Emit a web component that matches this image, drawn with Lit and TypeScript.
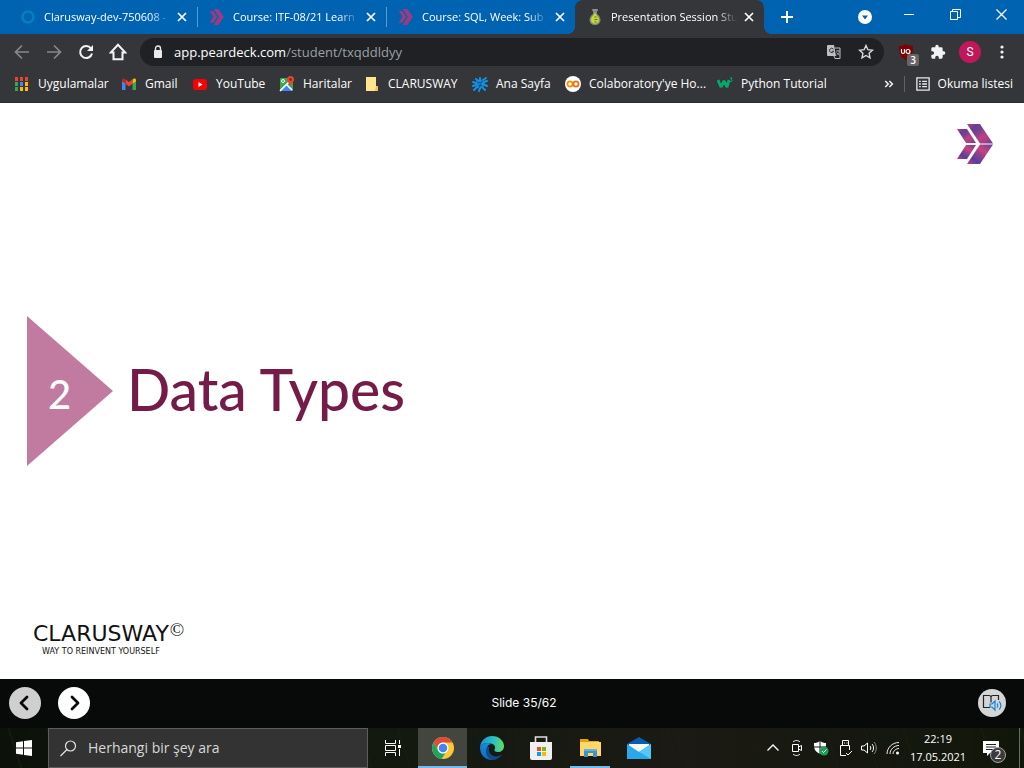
import { LitElement, html, css, svg } from "lit";
import { customElement } from "lit/decorators.js";
import { classMap } from "lit/directives/class-map.js";

const chevrons = html`<svg width="16" height="16" viewBox="0 0 37 41">
  <path d="M0 5h9l10 15-10 15H0l9-15z" fill="#9b3b83"/>
  <path d="M10 0h12l14 20-14 21H10l13-21z" fill="#9b3b83"/>
</svg>`;

const pear = html`<svg width="16" height="16" viewBox="0 0 16 16">
  <rect x="5" y="0" width="6" height="2" rx="1" fill="#8d9296"/>
  <path d="M6 2h4v3c2.500 1.500 3.500 4 3.500 6 0 3-2.500 5-5.500 5s-5.500-2-5.500-5c0-2 1-4.500 3.500-6z" fill="#808a86"/>
  <path d="M8 3c.5 3 4 4.500 4 8 0 2.500-1.800 3.800-4 3.800S4 13.500 4 11c0-3.500 3.500-5 4-8z" fill="#c5d92e"/>
  <path d="M7.500 8h2M7.500 10.500h3M7.500 13h2" stroke="#59701d" stroke-width="1"/>
</svg>`;

const ring = html`<svg width="16" height="16" viewBox="0 0 16 16">
  <circle cx="8" cy="8" r="5.500" fill="none" stroke="#0580bd" stroke-width="2.600"/>
</svg>`;

const cross = html`<svg width="10" height="10" viewBox="0 0 10 10"><path d="M1 1l8 8M9 1L1 9" stroke="#fff" stroke-width="1.700"/></svg>`;

const tabs = [
  { title: "Clarusway-dev-750608 -", icon: ring, active: false, line: true },
  { title: "Course: ITF-08/21 Learn", icon: chevrons, active: false, line: true },
  { title: "Course: SQL, Week: Sub", icon: chevrons, active: false, line: false },
  { title: "Presentation Session Stu", icon: pear, active: true, line: false },
];

const colors = ["#ea4335", "#ea4335", "#ea4335", "#34a853", "#4285f4", "#fbbc04", "#34a853", "#fbbc04", "#fbbc04"];

const bookmarks = [
  { label: "Uygulamalar", icon: html`<svg width="16" height="16" viewBox="0 0 16 16">${colors.map((c, i) => svg`<rect x=${1 + (i % 3) * 5} y=${1 + Math.floor(i / 3) * 5} width="3" height="4" fill=${c}/>`)}</svg>` },
  { label: "Gmail", icon: html`<svg width="16" height="16" viewBox="0 0 16 16">
    <path d="M1 14V4l3.500 2.600V14z" fill="#4285f4"/><path d="M11.500 14V6.600L15 4v10z" fill="#34a853"/>
    <path d="M11.500 3.500l1-.8c1.200-.8 2.500 0 2.500 1.200v1.300l-3.500 2.600z" fill="#fbbc04"/>
    <path d="M4.500 3.500L8 6.100l3.500-2.600v4.300L8 10.400 4.500 7.800z" fill="#ea4335"/>
    <path d="M1 3.900c0-1.200 1.300-2 2.500-1.200l1 .8v4.300L1 5.200z" fill="#c5221f"/></svg>` },
  { label: "YouTube", icon: html`<svg width="16" height="16" viewBox="0 0 16 16"><rect x="1" y="3" width="14" height="11" rx="3" fill="#f00"/><path d="M6.500 6l4 2.500-4 2.500z" fill="#fff"/></svg>` },
  { label: "Haritalar", icon: html`<svg width="16" height="16" viewBox="0 0 16 16">
    <rect x="1" y="2" width="13" height="13" rx="1" fill="#34a853"/><path d="M1 14l6-6 2 2-5 5H1z" fill="#fbd75b"/><path d="M14 14L8 8l-7 7h13z" fill="#4285f4"/>
    <path d="M8 9l5 5M1 15L10 6" stroke="#fff" stroke-width="1.600"/><circle cx="4" cy="5" r="1.500" fill="none" stroke="#fff"/>
    <path d="M11.500 0a3.500 3.500 0 0 1 3.500 3.500c0 2.500-2.500 3.500-3.500 7-1-3.500-3.500-4.500-3.500-7A3.500 3.500 0 0 1 11.500 0z" fill="#ea4335"/><circle cx="11.500" cy="3.500" r="1.300" fill="#8c1a12"/></svg>` },
  { label: "CLARUSWAY", icon: html`<svg width="16" height="16" viewBox="0 0 16 16"><path d="M2 1h10v9h2v5H2z" fill="#ffe58f"/><path d="M12 10h2v5h-3z" fill="#efc44e"/></svg>` },
  { label: "Ana Sayfa", icon: html`<svg width="16" height="16" viewBox="0 0 16 16"><circle cx="8" cy="8" r="4.500" fill="#138ad5"/>
    <path d="M1 6l3 1M4 3l2 2M8 2v2M11 4l3-2M11 8l4 2M1 10l3-1M2 14l4-4M7 15l1-3M11 12l2 2M12 6l3-1" stroke="#1592e2" stroke-width="2" stroke-linecap="round"/><path d="M5 6l3 1 3-2M6 9l4 1M9 8l-2 4" fill="none" stroke="#0b4b8c"/></svg>` },
  { label: "Colaboratory'ye Ho...", icon: html`<svg width="16" height="16" viewBox="0 0 16 16"><circle cx="8" cy="8" r="8" fill="#fff"/><circle cx="5" cy="8" r="2.600" fill="none" stroke="#f29100" stroke-width="1.800"/><circle cx="11" cy="8" r="2.600" fill="none" stroke="#e8710a" stroke-width="1.800"/></svg>` },
  { label: "Python Tutorial", icon: html`<svg width="16" height="16" viewBox="0 0 16 16"><path d="M1 4l3 7 3-6 3 6 2-7" fill="none" stroke="#04aa6d" stroke-width="2.800" stroke-linejoin="bevel"/><path d="M13 2h2l-1 1.500c1.500 0 1.500 2.500-1 2" fill="none" stroke="#04aa6d"/></svg>` },
];

const line = (d: string, w = 1.6, color = "#f1f3f4", size = 16) =>
  html`<svg width=${size} height=${size} viewBox="0 0 16 16" fill="none" stroke=${color} stroke-width=${w}><path d=${d} /></svg>`;

@customElement("browser-tabs")
class BrowserTabs extends LitElement {
  static styles = css`
    :host { display: block; background: #0063b1; color: #fff; font: 11px/16px "Open Sans", sans-serif; }
    .strip { display: flex; height: 34px; padding-left: 8px; }
    .tab { flex: 0 1 189px; min-width: 0; display: flex; align-items: center; gap: 8px; padding: 0 7px 0 12px; box-sizing: border-box; position: relative; }
    .tab svg { flex: none; }
    .title { flex: 1; min-width: 0; margin-right: -4px; white-space: nowrap; color: inherit; text-decoration: none; -webkit-mask-image: linear-gradient(90deg, #000 84%, transparent); mask-image: linear-gradient(90deg, #000 84%, transparent); }
    .line::after { content: ""; position: absolute; right: -1px; top: 7px; width: 1px; height: 20px; background: #5f9ccd; }
    .active { background: #35363a; border-radius: 8px 8px 0 0; }
    .active::before, .active::after { content: ""; position: absolute; bottom: 0; width: 8px; height: 8px; }
    .active::before { left: -8px; background: radial-gradient(circle at 0 0, transparent 8px, #35363a 8px); }
    .active::after { right: -8px; background: radial-gradient(circle at 100% 0, transparent 8px, #35363a 8px); }
    button { border: 0; padding: 0; background: none; display: grid; place-items: center; }
    .close { width: 16px; height: 16px; flex: none; }
    .add { width: 28px; margin-left: 9px; }
    .window { display: flex; margin-left: auto; }
    .window button { width: 46px; height: 28px; }
    .window .search { width: 42px; height: 34px; }
  `;
  render() {
    return html`<nav class="strip" aria-label="Tabs">
      ${tabs.map((t) => html`<div class=${classMap({ tab: true, active: t.active, line: t.line })}>
        ${t.icon}<a class="title" href="#">${t.title}</a><button class="close" aria-label="Close tab">${cross}</button>
      </div>`)}
      <button class="add" aria-label="New tab">${line("M8 2v12M2 8h12", 2, "#fff")}</button>
      <div class="window">
        <button class="search" aria-label="Search tabs"><svg width="14" height="14" viewBox="0 0 14 14"><circle cx="7" cy="7" r="7" fill="#fff"/><path d="M4 5.500h6L7 9.500z" fill="#0063b1"/></svg></button>
        <button aria-label="Minimize"><svg width="10" height="10"><path d="M0 5.500h10" stroke="#fff"/></svg></button>
        <button aria-label="Restore"><svg width="11" height="11" fill="none" stroke="#fff"><path d="M.5 2.500h7v8h-7zM2.500 2.500v-2h8v8h-3"/></svg></button>
        <button aria-label="Close"><svg width="11" height="11"><path d="M.5.500l10 10M10.500.500l-10 10" stroke="#fff" stroke-width="1.200"/></svg></button>
      </div>
    </nav>`;
  }
}

@customElement("browser-toolbar")
class BrowserToolbar extends LitElement {
  static styles = css`
    :host { display: block; background: #35363a; color: #fff; font: 12px/16px "Open Sans", sans-serif; border-bottom: 1px solid #28292c; }
    button { border: 0; padding: 0; background: none; display: grid; place-items: center; width: 32px; height: 28px; flex: none; position: relative; }
    .row { display: flex; align-items: center; height: 36px; padding: 0 6px; }
    .address { flex: 1; min-width: 0; display: flex; align-items: center; height: 28px; margin: 0 6px; padding-left: 12px; padding-right: 2px; box-sizing: border-box; border-radius: 14px; background: #202124; }
    .url { flex: 1; margin-left: 10px; font-size: 13px; line-height: 20px; color: #9aa0a6; text-decoration: none; white-space: nowrap; overflow: hidden; }
    .url b { font-weight: 400; color: #fff; }
    .count { position: absolute; right: 3px; bottom: 0; width: 12px; height: 12px; border-radius: 2px; background: #666; color: #fff; font: 600 10px/12px "Open Sans", sans-serif; }
    .avatar { width: 22px; height: 22px; border-radius: 50%; background: #c2185b; color: #fff; font: 12px/22px Roboto, sans-serif; }
    .bookmarks { display: flex; align-items: center; height: 28px; padding: 0 14px 4px; }
    .list { display: grid; grid-template-columns: 107px 71px 87px 85px 108px 93px 152px auto; }
    .mark { display: flex; align-items: center; gap: 8px; color: #fff; text-decoration: none; white-space: nowrap; }
    .end { display: flex; align-items: center; margin-left: auto; }
    .reading { border-left: 1px solid #5f6368; padding-left: 11px; margin-right: -3px; }
    .end button { width: 29px; height: 16px; }
  `;
  render() {
    return html`<div class="row">
        <button aria-label="Back">${line("M15 8H2M8 1.500L1.500 8 8 14.500", 1.7, "#86888a")}</button>
        <button aria-label="Forward">${line("M1 8h13M8 1.500L14.500 8 8 14.500", 1.7, "#86888a")}</button>
        <button aria-label="Reload"><svg width="16" height="16" viewBox="0 0 16 16"><path d="M13 4.500A6 6 0 1 0 14 9.500" fill="none" stroke="#f1f3f4" stroke-width="2"/><path d="M15 1v6H9z" fill="#f1f3f4"/></svg></button>
        <button aria-label="Home">${line("M8 1.500L1.500 8.500H4v6h8v-6h2.500z", 1.8, "#f1f3f4", 18)}</button>
        <div class="address">
          <svg width="12" height="14" viewBox="0 0 12 14"><rect x="2" y="5" width="8" height="8" rx="1" fill="#e8eaed"/><path d="M3.500 6V3.500a2.500 2.500 0 0 1 5 0V6" fill="none" stroke="#e8eaed" stroke-width="1.400"/></svg>
          <a class="url" href="#"><b>app.peardeck.com</b>/student/txqddldyy</a>
          <button aria-label="Translate"><svg width="16" height="16" viewBox="0 0 16 16"><path d="M2 1h6l2 11H2a1 1 0 0 1-1-1V2a1 1 0 0 1 1-1z" fill="#bdc1c6"/><path d="M8.500 4H14v10.500H9L8 12" fill="none" stroke="#bdc1c6"/><path d="M7.500 5.200a2.200 2.200 0 1 0 .3 2H5.700" fill="none" stroke="#35363a"/><path d="M10 7h4M12 6v1M13.500 7c-.5 2-1.500 3-3 4M10.500 8.500l3 3" fill="none" stroke="#9da1a6"/></svg></button>
          <button aria-label="Bookmark">${line("M8 1.500l1.900 4.200 4.600.5-3.400 3.100.9 4.500-4-2.300-4 2.300.9-4.500-3.400-3.100 4.600-.5z", 1.4, "#dadce0")}</button>
        </div>
        <button aria-label="uBlock Origin"><svg width="16" height="16" viewBox="0 0 16 16"><path d="M8 0c2 1.500 4 2 7 2 0 6 0 11-7 14C1 13 1 8 1 2c3 0 5-.5 7-2z" fill="#800000"/><path d="M3.500 5v3c0 2 3 2 3 0V5" fill="none" stroke="#fff" stroke-width="1.200"/><circle cx="10" cy="7.500" r="2" fill="none" stroke="#fff" stroke-width="1.200"/></svg><span class="count">3</span></button>
        <button aria-label="Extensions"><svg width="16" height="16" viewBox="0 0 24 24"><path fill="#f1f3f4" d="M20.500 11H19V7a2 2 0 0 0-2-2h-4V3.500a2.500 2.500 0 0 0-5 0V5H4a2 2 0 0 0-2 2v3.800h1.500a2.700 2.700 0 0 1 0 5.400H2V20a2 2 0 0 0 2 2h3.800v-1.500a2.700 2.700 0 0 1 5.400 0V22H17a2 2 0 0 0 2-2v-4h1.500a2.500 2.500 0 0 0 0-5z"/></svg></button>
        <button aria-label="Profile"><span class="avatar">S</span></button>
        <button aria-label="Menu"><svg width="4" height="16" fill="#f1f3f4"><circle cx="2" cy="3" r="1.600"/><circle cx="2" cy="8" r="1.600"/><circle cx="2" cy="13" r="1.600"/></svg></button>
      </div>
      <nav class="bookmarks" aria-label="Bookmarks">
        <div class="list">${bookmarks.map((b) => html`<a class="mark" href="#">${b.icon}<span>${b.label}</span></a>`)}</div>
        <div class="end">
          <button aria-label="More bookmarks">${line("M3 4l4 4-4 4M8.500 4l4 4-4 4", 2, "#f1f3f4", 12)}</button>
          <a class="mark reading" href="#">${line("M1 1h14v14H1zM3.500 5h2M7 5h5.500M3.500 8h2M7 8h5.500M3.500 11h2M7 11h5.500", 1.5, "#e8eaed", 14)}<span>Okuma listesi</span></a>
        </div>
      </nav>`;
  }
}

@customElement("deck-slide")
class DeckSlide extends LitElement {
  static styles = css`
    :host { display: flex; flex-direction: column; min-height: 0; }
    .slide { flex: 1; display: grid; grid-template-rows: 1fr auto 1fr; background: #fff; }
    .logo { justify-self: end; margin: 20px 30px 0 0; }
    .topic { display: flex; align-items: center; gap: 14px; margin-left: 27px; }
    .number { width: 86px; height: 150px; box-sizing: border-box; padding: 6px 0 0 21px; display: flex; align-items: center; background: #c27ba0; clip-path: polygon(0 0, 100% 50%, 0 100%); color: #fff; font: 500 40px/48px Lato, sans-serif; }
    h1 { margin: 0; padding-bottom: 4px; color: #741b47; font: 500 57px/64px Lato, sans-serif; white-space: nowrap; }
    .brand { align-self: end; justify-self: start; margin: 0 0 22px 33px; color: #111; font-family: "DejaVu Sans", sans-serif; }
    .name { font-size: 22px; line-height: 26px; display: flex; align-items: flex-start; gap: 1px; }
    .name sup { font: 19px/18px "Liberation Serif", serif; }
    .motto { font-size: 8px; line-height: 10px; margin-left: 9px; }
    .controls { display: flex; align-items: center; gap: 17px; height: 49px; box-sizing: border-box; padding: 0 18px 1px 9px; background: #080a09; color: #fff; }
    button { width: 32px; height: 32px; flex: none; border: 0; padding: 0; border-radius: 50%; background: #fff; display: grid; place-items: center; }
    .off { background: #cfcfcf; }
    .page { flex: 1; text-align: center; padding-right: 20px; font: 12px/16px Inter, sans-serif; }
    .reader { width: 28px; height: 28px; background: #d4d6d5; }
  `;
  render() {
    return html`<main class="slide">
        <svg class="logo" width="37" height="42" viewBox="0 0 37 42">
          <defs>
            <linearGradient id="a" x1="0" y1="0" x2="1" y2="1"><stop offset="0" stop-color="#c8437f"/><stop offset=".2" stop-color="#6b3c92"/><stop offset=".4" stop-color="#7a3f90"/><stop offset=".62" stop-color="#b84284"/><stop offset=".8" stop-color="#a83e86"/><stop offset="1" stop-color="#573d94"/></linearGradient>
            <linearGradient id="b" x1="0" y1="1" x2="1" y2="0"><stop offset="0" stop-color="#c53878"/><stop offset=".25" stop-color="#58409a"/><stop offset=".45" stop-color="#8c3f8c"/><stop offset=".65" stop-color="#c8437f"/><stop offset="1" stop-color="#674096"/></linearGradient>
          </defs>
          <path d="M0 6h10l9 14H9z" fill="url(#a)"/><path d="M9 22h10l-9 14H0z" fill="url(#b)"/>
          <path d="M10 1h13l13 19.500H23z" fill="url(#a)"/><path d="M23 21.500h13L23 41H10z" fill="url(#b)"/>
        </svg>
        <div class="topic"><div class="number">2</div><h1>Data Types</h1></div>
        <div class="brand"><div class="name">CLARUSWAY<sup>©</sup></div><div class="motto">WAY TO REINVENT YOURSELF</div></div>
      </main>
      <footer class="controls">
        <button class="off" aria-label="Previous slide"><svg width="16" height="16" viewBox="0 0 16 16"><path d="M10 2L4 8l6 6" fill="none" stroke="#080a09" stroke-width="2.800" stroke-linecap="round" stroke-linejoin="round"/></svg></button>
        <button aria-label="Next slide"><svg width="16" height="16" viewBox="0 0 16 16"><path d="M6 2l6 6-6 6" fill="none" stroke="#080a09" stroke-width="2.800" stroke-linecap="round" stroke-linejoin="round"/></svg></button>
        <span class="page">Slide 35/62</span>
        <button class="reader" aria-label="Immersive reader"><svg width="20" height="18" viewBox="0 0 20 18" fill="none"><path d="M8 13.500H1.500v-12H7c1.500 0 2 .5 2 2v5M9 3.500c0-1.500.500-2 2-2h5.500V6" stroke="#222" stroke-width="1.200"/><path d="M8 10v3h2l3 3V7l-3 3zM15 9.500c1 1 1 3 0 4M17 7.500c2.500 2 2.500 6 0 8" stroke="#1683d8" stroke-width="1.200"/></svg></button>
      </footer>`;
  }
}

const apps = [
  { name: "Google Chrome", cls: "current", icon: html`<svg width="24" height="24" viewBox="0 0 24 24"><circle cx="12" cy="12" r="11" fill="#fcc934"/><path d="M2.500 6.500A11 11 0 0 1 21.500 6.500H12a5.500 5.500 0 0 0-4.800 8.200z" fill="#dd4b3e"/><path d="M2.500 6.500l4.700 8.200c1 1.800 2.900 2.800 4.800 2.800l2.500-.6L10.500 22.900A11 11 0 0 1 2.500 6.500z" fill="#1da462"/><circle cx="12" cy="12" r="5.500" fill="#fff"/><circle cx="12" cy="12" r="4.300" fill="#4285f4"/></svg>` },
  { name: "Microsoft Edge", cls: "", icon: html`<svg width="24" height="24" viewBox="0 0 24 24"><defs><linearGradient id="e1" x1="0" y1="0" x2="1" y2="0"><stop offset="0" stop-color="#1893d7"/><stop offset=".55" stop-color="#28bfc9"/><stop offset="1" stop-color="#65dd58"/></linearGradient><linearGradient id="e2" x1="0" y1="0" x2="0" y2="1"><stop offset="0" stop-color="#168cd9"/><stop offset="1" stop-color="#1268bd"/></linearGradient></defs>
    <path d="M0 11C1 4 6 0 12 0c7 0 12 5 12 10 0 4-3 6-6 6s-4-1.500-3.500-2.500c1-1.500 1-4-2-5.500C8 6 2 7 0 11z" fill="url(#e1)"/><path d="M0 11c2-4 8-5 12-3-4 0-5 3-5 5.500C7 19 12 24 12 24 5 24 0 19 0 11z" fill="url(#e2)"/><path d="M9.500 10.500C8 13 9 20 15.500 20.500c3 .2 5-1 6.500-2.500-2 4-6 6-10 6-4-1-6.500-6-6-10 .2-2 1.500-3.500 3.500-3.500z" fill="#114a8b"/></svg>` },
  { name: "Microsoft Store", cls: "", icon: html`<svg width="24" height="24" viewBox="0 0 24 24"><path d="M6.500 7V1h11v6" fill="none" stroke="#dedede" stroke-width="1.600"/><path d="M1 6h22v16a2 2 0 0 1-2 2H3a2 2 0 0 1-2-2z" fill="#f0f0f0"/><path d="M8 11h4v4H8z" fill="#f25022"/><path d="M13 11h4v4h-4z" fill="#7fba00"/><path d="M8 16h4v4H8z" fill="#00a4ef"/><path d="M13 16h4v4h-4z" fill="#ffb900"/></svg>` },
  { name: "File Explorer", cls: "open", icon: html`<svg width="24" height="24" viewBox="0 0 24 24"><path d="M2 3h8l1 2h10v14H2z" fill="#e5a00d"/><path d="M2 6h21v14H2z" fill="#ffd867"/><path d="M6 21v-8h13v8h-4v-4h-5v4z" fill="#3f92d2"/><path d="M6 13h13v2H6z" fill="#62b0e8"/></svg>` },
  { name: "Mail", cls: "", icon: html`<svg width="26" height="24" viewBox="0 0 26 24"><path d="M1 8l12-7 12 7v3H1z" fill="#0b5cad"/><path d="M3 8h20v8H3z" fill="#f4f7f9"/><path d="M1 8l12 8 12-8v15H1z" fill="#2aa8ea"/><path d="M25 8v15L10 14l3 2z" fill="#55c7f6"/></svg>` },
];

@customElement("task-bar")
class TaskBar extends LitElement {
  static styles = css`
    :host { display: block; color: #fff; font: 11px/18px "Open Sans", sans-serif; }
    .bar { display: flex; height: 40px; background: #12150d; background-image: repeating-linear-gradient(72deg, transparent 0 19px, #161c10 20px, transparent 22px 37px), linear-gradient(90deg, #0c120a, #141910 40%, #1b1a14 66%, #11160a); }
    button { border: 0; padding: 0; background: none; color: inherit; font: inherit; display: grid; place-items: center; height: 40px; flex: none; position: relative; }
    .start { width: 48px; }
    .search { display: flex; flex: 0 1 320px; align-items: center; gap: 11px; box-sizing: border-box; padding: 0 11px; background: #333; border: 1px solid #5d5d5d; }
    .search input { flex: 1; min-width: 0; padding: 0; border: 0; outline: 0; background: none; color: #fff; font: 14px/20px "Open Sans", sans-serif; }
    .search input::placeholder { color: #d8d8d8; opacity: 1; }
    .views { width: 50px; }
    .app { width: 49px; }
    .current { background: #42463e; box-shadow: inset 0 -2px #76b9ed; }
    .open { background: linear-gradient(#76b9ed, #76b9ed) 50% 100% / 40px 2px no-repeat; }
    .tray { display: flex; margin-left: auto; }
    .tray button { width: 24px; }
    .tray .clock { width: 66px; align-content: center; white-space: nowrap; }
    .tray .notes { width: 48px; padding-right: 8px; }
    .badge { position: absolute; left: 19px; top: 19px; width: 14px; height: 14px; border: 1px solid #a5a5a5; border-radius: 50%; background: #3b3b3b; font: 12px/14px "Open Sans", sans-serif; }
    .peek { width: 5px; box-sizing: border-box; border-left: 1px solid #6a6c66; }
  `;
  render() {
    return html`<footer class="bar">
      <button class="start" aria-label="Start"><svg width="16" height="16" viewBox="0 0 16 16" fill="#fff"><path d="M0 2.200l7-1V7.500H0zM8 1.100L16 0v7.500H8zM0 8.500h7v6.300l-7-1zM8 8.500h8V16l-8-1.100z"/></svg></button>
      <label class="search"><svg width="17" height="17" viewBox="0 0 17 17" fill="none" stroke="#e4e4e4" stroke-width="1.200"><circle cx="10.500" cy="6" r="5"/><path d="M7 9.500L.5 16"/></svg><input type="text" aria-label="Herhangi bir şey ara" placeholder="Herhangi bir şey ara"></label>
      <button class="views" aria-label="Task view"><svg width="18" height="16" fill="none" stroke="#fff"><path d="M1.500 0v3.500h10V0M1.500 5.500h10v5h-10zM1.500 16v-3.500h10V16M15.500 0v4M15.500 9v7"/><path d="M14 5h3v3h-3z" fill="#fff" stroke="none"/></svg></button>
      ${apps.map((a) => html`<button class="app ${a.cls}" aria-label=${a.name}>${a.icon}</button>`)}
      <div class="tray">
        <button aria-label="Hidden icons"><svg width="12" height="8" fill="none" stroke="#fff" stroke-width="1.300"><path d="M.5 6.500L6 1l5.500 5.500"/></svg></button>
        <button aria-label="Camera"><svg width="12" height="16" fill="none" stroke="#fff"><path d="M2 2C4 0 7 0 9 2M2 14c2 2 5 2 7 0M1.500 4.500h6v7h-6zM7.500 7l3-1.500v5L7.500 9"/></svg></button>
        <button aria-label="Security"><svg width="16" height="16"><path d="M7 1c2 1.500 4 2 6 2 0 5 0 8-6 11C1 11 1 8 1 3c2 0 4-.5 6-2z" fill="#fff"/><path d="M7 1v13M1 7h12" stroke="#171c10"/><circle cx="11" cy="11" r="4.500" fill="#1b9e55"/><path d="M9 11l1.500 1.500 3-3" fill="none" stroke="#fff"/></svg></button>
        <button aria-label="USB"><svg width="13" height="16" fill="none" stroke="#fff"><path d="M3.500 5V.5h6V5M1.500 5.500h9V10M1.500 5.500v10H7M7 13l2 2 4-4M5 3h1M7.500 3h1"/></svg></button>
        <button aria-label="Volume"><svg width="16" height="16" fill="none" stroke="#fff"><path d="M.5 6v4H3l3.500 3V3L3 6zM9 6c1 1 1 3 0 4M11 4c2 2 2 6 0 8"/><path d="M13 2c3 3 3 9 0 12" stroke="#888"/></svg></button>
        <button aria-label="Wi-Fi"><svg width="14" height="14" fill="none" stroke="#f0f0f0"><path d="M1 13C1 7 6 1.500 13 1.500M4 13c0-4.500 4-8.500 9-8.500M7 13c0-3 3-5.500 6-5.500"/><circle cx="11.500" cy="12" r="1.500" fill="#fff" stroke="none"/></svg></button>
        <button class="clock"><span>22:19</span><span>17.05.2021</span></button>
        <button class="notes" aria-label="Notifications"><svg width="16" height="16"><path d="M0 1h16v12H7l-3 3v-3H0z" fill="#fff"/><path d="M3 4.500h10M3 7h10M3 9.500h7" stroke="#222"/></svg><span class="badge">2</span></button>
        <div class="peek"></div>
      </div>
    </footer>`;
  }
}

@customElement("app-root")
class AppRoot extends LitElement {
  static styles = css`
    :host { display: flex; flex-direction: column; min-height: 100vh; }
    deck-slide { flex: 1; }
  `;
  render() {
    return html`<browser-tabs></browser-tabs><browser-toolbar></browser-toolbar><deck-slide></deck-slide><task-bar></task-bar>`;
  }
}
